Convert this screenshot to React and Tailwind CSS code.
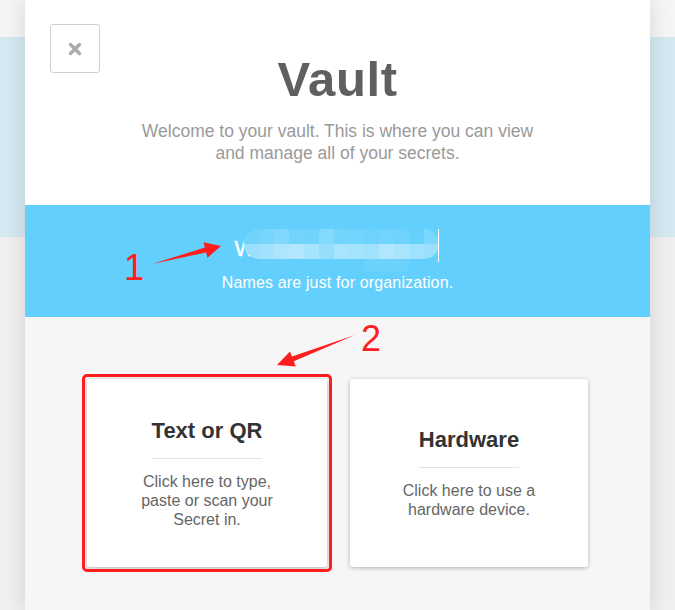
import React from "react";

const topBlocks = [
  "bg-[#6fd3fc]", "bg-[#76d5fc]", "bg-[#80d9fd]", "bg-[#72d4fc]", "bg-[#6fd3fc]",
  "bg-[#84dafd]", "bg-[#73d5fc]", "bg-[#70d4fc]", "bg-[#6ed3fc]", "bg-[#72d4fc]",
  "bg-[#6ed3fc]", "bg-[#66d0fc]", "bg-[#7ad7fd]",
];
const bottomBlocks = [
  "bg-[#9be0fd]", "bg-[#a2e2fd]", "bg-[#ade5fe]", "bg-[#b2e7fe]", "bg-[#a6e3fd]",
  "bg-[#97defd]", "bg-[#a8e4fd]", "bg-[#a4e3fd]", "bg-[#a0e1fd]", "bg-[#b0e6fe]",
  "bg-[#a9e4fd]", "bg-[#a0e1fd]", "bg-[#9ae0fd]",
];

function Card({ title, lines, className = "" }) {
  return (
    <div
      className={`h-[188px] bg-white rounded-[3px] shadow-[0_1px_4px_rgba(0,0,0,0.28)] flex flex-col items-center justify-center text-center ${className}`}
    >
      <div className="text-[22px] leading-[26px] font-bold text-[#333] pb-[14px] border-b border-[#e3e3e3]">
        {title}
      </div>
      <div className="mt-[13px] text-[16px] leading-[19px] text-[#666]">
        {lines.map((l) => (
          <div key={l}>{l}</div>
        ))}
      </div>
    </div>
  );
}

export default function App() {
  return (
    <div
      className="relative w-[675px] h-[610px] overflow-hidden bg-[#f0f0f0]"
      style={{ fontFamily: '"Liberation Sans", Arial, sans-serif' }}
    >
      {/* page behind the modal */}
      <div className="h-[37px] bg-[#f5f5f5]" />
      <div className="h-[200px] bg-[#d4e9f2]" />

      {/* modal */}
      <div className="absolute left-[25px] top-0 w-[625px] h-[610px] flex flex-col shadow-[0_0_22px_rgba(0,0,0,0.13)]">
        {/* header */}
        <div className="relative h-[205px] bg-white flex flex-col items-center">
          <button className="absolute left-[25px] top-[24px] w-[50px] h-[49px] border border-[#cfcfcf] rounded-[3px] flex items-center justify-center">
            <svg width="14" height="14" viewBox="0 0 14 14">
              <path d="M2.5 2.5 L11.5 11.5 M11.5 2.5 L2.5 11.5" stroke="#ababab" strokeWidth="3.4" strokeLinecap="round" />
            </svg>
          </button>
          <h1 className="pt-[55px] text-[49px] leading-[48px] font-bold tracking-[0.6px] text-[#5f5f5f]">Vault</h1>
          <p className="mt-[17px] text-[17.5px] leading-[22px] text-[#9a9a9a] text-center">
            Welcome to your vault. This is where you can view
            <br />
            and manage all of your secrets.
          </p>
        </div>

        {/* name input band */}
        <div className="h-[112px] bg-[#63cffc] flex flex-col items-center">
          <div className="relative mt-[24px] w-[204px] h-[40px] ml-[-2px]">
            <span className="text-[22px] leading-[40px] text-white [-webkit-text-stroke:0.4px_white]">W</span>
            <div className="absolute left-[9px] top-0 w-[195px] h-[30px] rounded-full overflow-hidden flex flex-col">
              <div className="flex h-[15px]">
                {topBlocks.map((c, i) => (
                  <div key={i} className={`flex-1 ${c}`} />
                ))}
              </div>
              <div className="flex h-[15px]">
                {bottomBlocks.map((c, i) => (
                  <div key={i} className={`flex-1 ${c}`} />
                ))}
              </div>
            </div>
            <div className="absolute left-[129px] top-[30px] w-[45px] h-[13px] bg-[#6bd2fc] rounded-b-[6px]" />
            <div className="absolute left-[203px] top-0 w-px h-[33px] bg-white" />
          </div>
          <div className="mt-[4px] text-[16px] leading-[20px] tracking-[0.15px] text-white">
            Names are just for organization.
          </div>
        </div>

        {/* type choice */}
        <div className="flex-1 bg-[#f6f6f6] pt-[62px] pl-[62px]">
          <div className="flex gap-[23px]">
            <div className="relative w-[240px]">
              <Card
                title="Text or QR"
                lines={["Click here to type,", "paste or scan your", "Secret in."]}
              />
              <div className="absolute -inset-[5px] border-[3px] border-[#ff1d1d] rounded-[5px]" />
            </div>
            <Card
              className="w-[238px]"
              title="Hardware"
              lines={["Click here to use a", "hardware device."]}
            />
          </div>
        </div>
      </div>

      {/* annotations */}
      <svg className="absolute inset-0 pointer-events-none" width="675" height="610">
        <polygon
          points="152,264 206.1,252.4 207.5,257.7 221,246 203.5,242.3 204.9,247.6"
          fill="#ff1d1d"
        />
        <polygon
          points="355,335 293.8,361.2 295.8,366.4 277,365 290,351.4 292,356.6"
          fill="#ff1d1d"
        />
      </svg>
      <div className="absolute left-[124px] top-[250px] text-[36px] leading-[36px] text-[#ff1d1d]">1</div>
      <div className="absolute left-[361px] top-[321px] text-[36px] leading-[36px] text-[#ff1d1d]">2</div>
    </div>
  );
}
